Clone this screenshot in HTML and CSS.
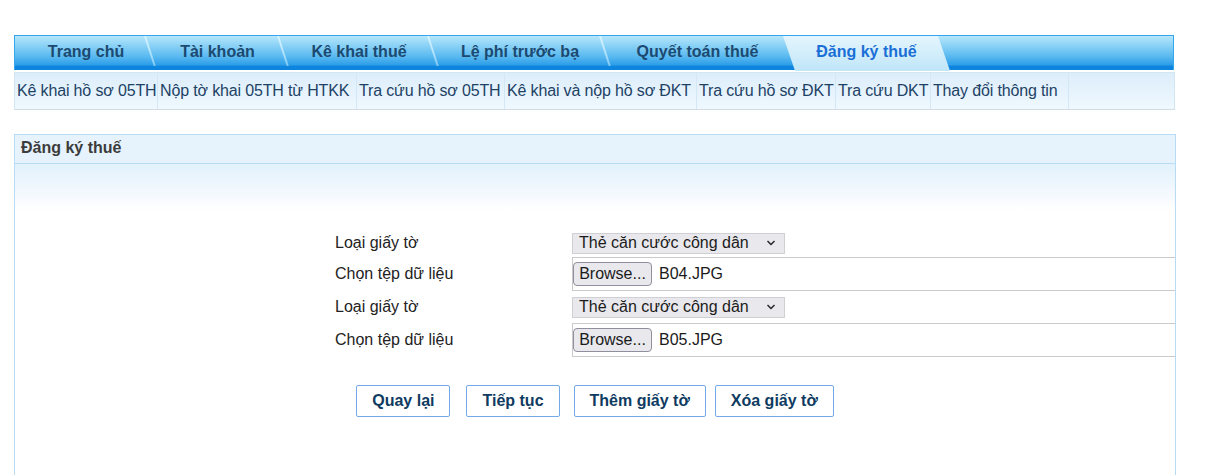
FILE: index.html
```html
<!DOCTYPE html>
<html lang="vi">
<head>
<meta charset="utf-8">
<title>Đăng ký thuế</title>
<link rel="stylesheet" href="styles.css">
</head>
<body>
<div class="page">
  <nav class="tabs">
    <a class="tab">Trang chủ</a>
    <a class="tab">Tài khoản</a>
    <a class="tab">Kê khai thuế</a>
    <a class="tab">Lệ phí trước bạ</a>
    <a class="tab">Quyết toán thuế</a>
    <a class="tab active">Đăng ký thuế</a>
  </nav>
  <nav class="submenu">
    <a class="sub">Kê khai hồ sơ 05TH</a>
    <a class="sub">Nộp tờ khai 05TH từ HTKK</a>
    <a class="sub">Tra cứu hồ sơ 05TH</a>
    <a class="sub">Kê khai và nộp hồ sơ ĐKT</a>
    <a class="sub">Tra cứu hồ sơ ĐKT</a>
    <a class="sub">Tra cứu DKT</a>
    <a class="sub">Thay đổi thông tin</a>
  </nav>

  <section class="panel">
    <div class="panel-head">Đăng ký thuế</div>
    <div class="panel-body">
      <div class="form">
        <div class="label">Loại giấy tờ</div>
        <div class="field">
          <span class="select">Thẻ căn cước công dân<svg class="chev" width="10" height="6" viewBox="0 0 10 6"><path d="M1.5 1 L5 4.5 L8.5 1" fill="none" stroke="#222" stroke-width="1.4"/></svg></span>
        </div>
        <div class="label">Chọn tệp dữ liệu</div>
        <div class="field file">
          <span class="browse">Browse...</span><span class="fname">B04.JPG</span>
        </div>
        <div class="label">Loại giấy tờ</div>
        <div class="field">
          <span class="select">Thẻ căn cước công dân<svg class="chev" width="10" height="6" viewBox="0 0 10 6"><path d="M1.5 1 L5 4.5 L8.5 1" fill="none" stroke="#222" stroke-width="1.4"/></svg></span>
        </div>
        <div class="label">Chọn tệp dữ liệu</div>
        <div class="field file">
          <span class="browse">Browse...</span><span class="fname">B05.JPG</span>
        </div>
      </div>
      <div class="buttons">
        <button class="btn">Quay lại</button>
        <button class="btn">Tiếp tục</button>
        <button class="btn">Thêm giấy tờ</button>
        <button class="btn">Xóa giấy tờ</button>
      </div>
    </div>
  </section>
</div>
</body>
</html>
```

FILE: styles.css
```css
* { box-sizing: border-box; }
html, body { margin: 0; padding: 0; background: #fff; }
body {
  font-family: "Liberation Sans", Arial, sans-serif;
  color: #222;
  overflow: hidden;
}
.page {
  padding: 35px 0 0 14px;
  width: 1176px;
}

/* main tabs */
.tabs {
  display: flex;
  height: 35px;
  width: 1160px;
  border: 1px solid #36a6ec;
  border-bottom: none;
  background: linear-gradient(to bottom, #b7e6fb 0%, #8fd4f7 25%, #5ab9f0 60%, #2b9de8 86%, #0d85de 88%, #0d85de 100%);
}
.tab {
  position: relative;
  display: flex;
  align-items: center;
  justify-content: center;
  padding: 0 0 2px 12px;
  font-weight: bold;
  font-size: 16px;
  color: #1c4a70;
  white-space: nowrap;
}
.tab:nth-child(1) { width: 130px; }
.tab:nth-child(2) { width: 133px; }
.tab:nth-child(3) { width: 150px; }
.tab:nth-child(4) { width: 172px; }
.tab:nth-child(5) { width: 183px; }
.tab:nth-child(6) { width: 155px; }
.tab::after {
  content: "";
  position: absolute;
  right: -1px;
  top: 0;
  height: 30px;
  width: 2px;
  background: linear-gradient(to bottom, rgba(220,245,255,0.9), rgba(190,235,255,0.55));
  transform: skewX(18deg);
  transform-origin: top;
}
.tab:nth-child(5)::after, .tab.active::after { display: none; }
.tab.active {
  color: #1a6fd6;
  z-index: 1;
}
.tab.active::before {
  content: "";
  position: absolute;
  left: 0;
  right: 0;
  top: 0;
  bottom: -1px;
  z-index: -1;
  background: linear-gradient(to bottom, #e4f5fd 0%, #d2eefb 50%, #bfe5f8 100%);
  transform: skewX(19deg);
  transform-origin: top;
}

/* sub menu */
.submenu {
  display: flex;
  margin-top: 2px;
  height: 38px;
  width: 1161px;
  border: 1px solid #d3e6f4;
  border-bottom-color: #d2dde6;
  background: linear-gradient(to bottom, #dcedfa 0%, #e8f4fd 60%, #eff8fe 100%);
}
.sub {
  display: flex;
  align-items: center;
  padding: 0 0 1px 2px;
  font-size: 16px;
  letter-spacing: -0.15px;
  color: #1e4266;
  white-space: nowrap;
  border-right: 1px solid #d3e7f5;
}
.sub:nth-child(1) { width: 143px; }
.sub:nth-child(2) { width: 199px; }
.sub:nth-child(3) { width: 148px; }
.sub:nth-child(4) { width: 192px; }
.sub:nth-child(5) { width: 139px; }
.sub:nth-child(6) { width: 95px; }
.sub:nth-child(7) { width: 138px; }

/* panel */
.panel {
  margin-top: 24px;
  width: 1162px;
  border: 1px solid #b9dcf6;
  border-bottom: none;
  height: 360px;
}
.panel-head {
  height: 29px;
  display: flex;
  align-items: center;
  padding-left: 6px;
  padding-bottom: 2px;
  font-weight: bold;
  font-size: 16px;
  color: #3c3c3c;
  background: #e6f3fc;
  border-bottom: 1px solid #b9dcf6;
}
.panel-body {
  background: linear-gradient(to bottom, #e2f1fb 0px, #f4f9fe 30px, #ffffff 47px);
  padding-top: 65px;
  height: 330px;
}

/* form */
.form {
  display: grid;
  grid-template-columns: 237px 1fr;
  margin-left: 320px;
}
.label {
  font-size: 16px;
  color: #222;
  display: flex;
  align-items: center;
}
.form .label:nth-child(1), .form .field:nth-child(2) { height: 28px; }
.form .label:nth-child(3), .form .field:nth-child(4) { height: 34px; }
.form .label:nth-child(5), .form .field:nth-child(6) { height: 32px; }
.form .label:nth-child(7), .form .field:nth-child(8) { height: 34px; }
.field {
  display: flex;
  align-items: center;
}
.field.file {
  border: 1px solid #cacaca;
  border-right: none;
}
.select {
  display: inline-flex;
  align-items: center;
  justify-content: space-between;
  width: 213px;
  height: 21px;
  padding: 0 5px 0 6px;
  background: #e9e9ed;
  border: 1px solid #cfcfd4;
  font-size: 16px;
  color: #1b1b1b;
}
.chev { margin-right: 3px; }
.browse {
  display: inline-flex;
  align-items: center;
  justify-content: center;
  height: 24px;
  width: 79px;
  background: #e9e9ed;
  border: 1px solid #8f8f9d;
  border-radius: 4px;
  font-size: 16px;
  color: #1b1b1b;
}
.fname {
  font-size: 16px;
  color: #1b1b1b;
  margin-left: 7px;
}

/* buttons */
.buttons {
  display: flex;
  justify-content: center;
  margin-top: 28px;
}
.btn {
  height: 32px;
  padding: 0 15px;
  background: #fff;
  border: 1px solid #74aaea;
  border-radius: 2px;
  font-family: "Liberation Sans", Arial, sans-serif;
  font-weight: bold;
  font-size: 16px;
  color: #0f3b61;
}
.btn:nth-child(1) { margin-right: 16px; }
.btn:nth-child(2) { margin-right: 14px; }
.btn:nth-child(3) { margin-right: 9px; }
```
